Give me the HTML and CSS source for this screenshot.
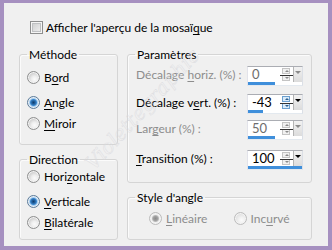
FILE: index.html
```html
<!DOCTYPE html>
<html lang="fr">
<head>
<meta charset="utf-8">
<title>Mosaïque</title>
<link rel="stylesheet" href="styles.css">
</head>
<body>
<div class="win">
  <div class="check"><span class="cb"></span><span>Afficher l'aperçu de la mosaï<u>q</u>ue</span></div>
  <div class="cols">
    <div class="col left">
      <fieldset class="grp methode">
        <legend>Méthode</legend>
        <div class="opt o1"><span class="rb"></span><span>B<u>o</u>rd</span></div>
        <div class="opt o2"><span class="rb on"></span><span><u>A</u>ngle</span></div>
        <div class="opt o3"><span class="rb"></span><span><u>M</u>iroir</span></div>
      </fieldset>
      <fieldset class="grp direction">
        <legend>Direction</legend>
        <div class="opt d1"><span class="rb"></span><span>Hori<u>z</u>ontale</span></div>
        <div class="opt d2"><span class="rb on"></span><span><u>V</u>erticale</span></div>
        <div class="opt d3"><span class="rb"></span><span><u>B</u>ilatérale</span></div>
      </fieldset>
    </div>
    <div class="col right">
      <fieldset class="grp params">
        <legend>Paramètres</legend>
        <div class="row r1 dis">
          <span class="lbl">Décalage <u>h</u>oriz. (%) :</span>
          <div class="spin"><div class="top"><span class="val">0</span><span class="ud"><i class="up"></i><i class="dn"></i></span><span class="dd"><i></i></span></div><div class="track"><span class="bar" style="width:50%"></span></div></div>
        </div>
        <div class="row r2 focus">
          <span class="lbl">Décalage v<u>e</u>rt. (%) :</span>
          <div class="spin"><div class="top"><span class="val">-43</span><span class="ud"><i class="up"></i><i class="dn"></i></span><span class="dd"><i></i></span></div><div class="track"><span class="bar" style="width:28.5%"></span></div></div>
        </div>
        <div class="row r3 dis">
          <span class="lbl">Lar<u>g</u>eur (%) :</span>
          <div class="spin"><div class="top"><span class="val">50</span><span class="ud"><i class="up"></i><i class="dn"></i></span><span class="dd"><i></i></span></div><div class="track"><span class="bar" style="width:50%"></span></div></div>
        </div>
        <div class="row r4">
          <span class="lbl"><u>T</u>ransition (%) :</span>
          <div class="spin"><div class="top"><span class="val">100</span><span class="ud"><i class="up"></i><i class="dn"></i></span><span class="dd"><i></i></span></div><div class="track"><span class="bar" style="width:100%"></span></div></div>
        </div>
      </fieldset>
      <fieldset class="grp style">
        <legend>Style d'angle</legend>
        <div class="hopts">
          <div class="opt dis"><span class="rb on"></span><span><u>L</u>inéaire</span></div>
          <div class="opt dis"><span class="rb"></span><span>Inc<u>u</u>rvé</span></div>
        </div>
      </fieldset>
    </div>
  </div>
  <div class="wm">Violettegraphic</div>
</div>
</body>
</html>
```
FILE: styles.css
```css
* { box-sizing: border-box; }
html, body { margin: 0; }
body {
  background: #a690c0;
  font-family: Lato, "Noto Sans", sans-serif;
  font-size: 12px;
  color: #000;
  width: 332px;
  height: 250px;
  overflow: hidden;
}
u { text-decoration-thickness: 1px; text-underline-offset: 2px; }

.win {
  position: relative;
  margin: 3px 4px 0 4px;
  height: 243px;
  background: #f0f0f0;
  padding: 18px 16px 0 15px;
  overflow: hidden;
}

.check {
  display: flex;
  align-items: center;
  gap: 3px;
  margin-left: 11px;
  height: 13px;
  line-height: 13px;
}
.cb {
  width: 13px;
  height: 13px;
  border: 1px solid #8e8f8f;
  background: linear-gradient(135deg, #c9cacb, #f4f4f4);
  box-shadow: inset 0 0 0 1px #f5f5f5, inset 0 0 0 2px #bfc1c3;
}

.cols {
  display: flex;
  gap: 9px;
  margin-top: 13px;
}
.col { display: flex; flex-direction: column; gap: 7px; }
.left { width: 99px; }
.right { width: 185px; }

.grp {
  margin: 0;
  padding: 0;
  min-width: 0;
  border: 1px solid #d5d5d5;
  border-radius: 3px;
  box-shadow: inset 1px 1px 0 #fbfbfb;
}
.grp legend {
  margin-left: 7px;
  padding: 0 2px;
  line-height: 15px;
  font-size: 12px;
}
.methode { height: 98px; }
.direction { height: 88px; }
.params { height: 136px; }
.style { height: 50px; }

.opt {
  display: flex;
  align-items: center;
  gap: 4px;
  height: 16px;
  margin-left: 7px;
}
.o1 { margin-top: 7px; }
.o2 { margin-top: 9px; }
.o3 { margin-top: 5px; }
.d1 { margin-top: 1px; }
.d2 { margin-top: 9px; }
.d3 { margin-top: 5px; }

.rb {
  width: 13px;
  height: 13px;
  border-radius: 50%;
  border: 1px solid #8e8f8f;
  background: radial-gradient(circle at 60% 65%, #fbfbfb 0, #eeeeee 3px, #d2d2d2 6px);
  box-shadow: inset 0 0 0 1px #f3f3f3;
  flex: none;
}
.rb.on {
  border-color: #5b7b99;
  background: radial-gradient(circle at 50% 50%, #0f3d6e 0, #1f5b97 1.5px, #3a86cc 3px, #a9cff0 4px, #e6eef6 5px, #dfe6ee 6px);
  box-shadow: none;
}
.dis { color: #8d8d8d; }
.opt.dis .rb {
  border-color: #bcbcbc;
  background: radial-gradient(circle at 60% 65%, #fbfbfb 0, #f1f1f1 3px, #e2e2e2 6px);
}
.opt.dis .rb.on {
  background: radial-gradient(circle at 50% 50%, #8c8c8c 0, #9e9e9e 2px, #b9b9b9 3px, #f0f0f0 4px, #f4f4f4 5px, #e6e6e6 6px);
}

.hopts {
  display: flex;
  padding-left: 14px;
  margin-top: 5px;
}
.hopts .opt { width: 82px; }

.row {
  display: flex;
  align-items: flex-start;
  justify-content: space-between;
  margin: 0 8px 0 8px;
  height: 20px;
}
.r1 { margin-top: 4px; }
.r2 { margin-top: 8px; }
.r3 { margin-top: 6px; }
.r4 { margin-top: 10px; }
.lbl { white-space: nowrap; line-height: 17px; }

.spin {
  width: 56px;
  height: 20px;
  border: 1px solid #abadb3;
  border-color: #abadb3 #dbdfe6 #e3e9ef #e2e3ea;
  background: #fff;
  display: flex;
  flex-direction: column;
}
.spin .top {
  display: flex;
  flex: 1;
  min-height: 0;
}
.val {
  flex: 1;
  padding-left: 4px;
  font-size: 13px;
  line-height: 15px;
  color: #000;
}
.dis .val { color: #6d6d6d; }
.ud {
  width: 12px;
  display: flex;
  flex-direction: column;
  justify-content: center;
  gap: 1px;
  position: relative;
  margin-right: 1px;
}
.ud i {
  display: block;
  width: 8px;
  height: 6px;
  margin-left: 2px;
  border: 1px solid #c4c4c4;
  background: #f0f0f0;
  position: relative;
}
.ud i::after {
  content: "";
  position: absolute;
  left: 1.5px;
  border-left: 2px solid transparent;
  border-right: 2px solid transparent;
}
.ud .up::after { top: 1px; border-bottom: 2px solid #8a8a8a; }
.ud .dn::after { top: 1px; border-top: 2px solid #8a8a8a; }
.ud::after {
  content: "";
  position: absolute;
  left: 0;
  right: -4px;
  top: 50%;
  border-top: 1px solid #333;
}
.focus .ud i { border-color: #6a9fcf; background: #d9ebf9; }
.focus .ud .up::after { border-bottom-color: #2c5f8f; }
.focus .ud .dn::after { border-top-color: #2c5f8f; }
.dd {
  width: 9px;
  background: linear-gradient(#f2f2f2, #dcdcdc);
  border-left: 1px solid #b5b5b5;
  position: relative;
}
.dd i {
  position: absolute;
  left: 1px;
  top: 4px;
  border-left: 3px solid transparent;
  border-right: 3px solid transparent;
  border-top: 3px solid #8a8a8a;
}
.focus .dd i, .r4 .dd i { border-top-color: #000; }
.track { height: 3px; }
.bar { display: block; height: 3px; background: #3f8fdb; }

.wm {
  position: absolute;
  left: 60px;
  top: 94px;
  transform: rotate(-47deg);
  font-family: "DejaVu Serif", serif;
  font-size: 20px;
  font-style: italic;
  color: transparent;
  -webkit-text-stroke: 0.4px #dadade;
  pointer-events: none;
  white-space: nowrap;
}
```
